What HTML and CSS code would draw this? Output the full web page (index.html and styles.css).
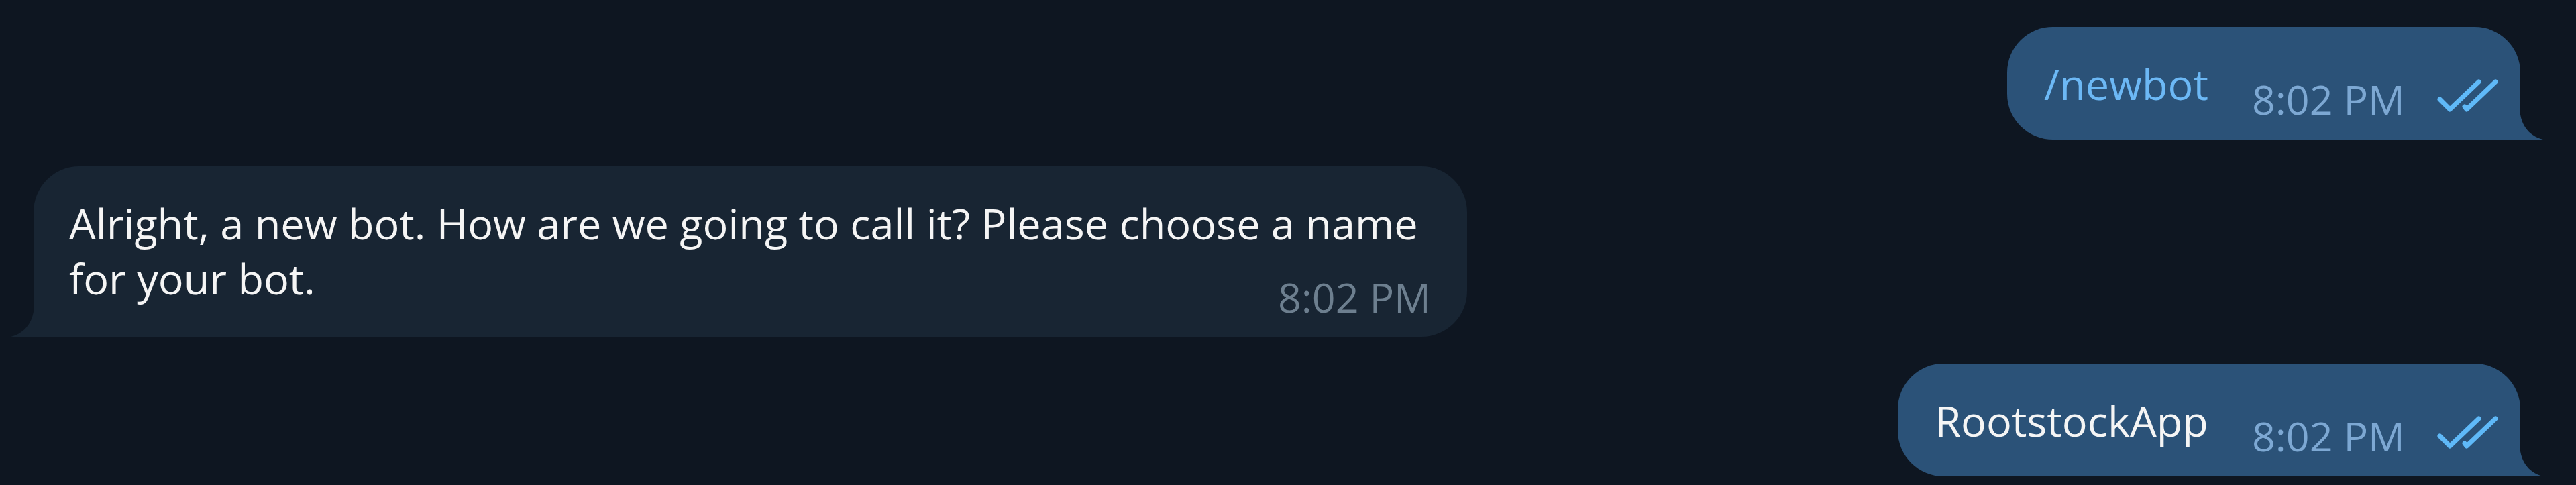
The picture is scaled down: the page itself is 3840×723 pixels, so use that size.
FILE: index.html
```html
<!DOCTYPE html>
<html lang="en">

<head>
    <meta charset="UTF-8">
    <meta name="viewport" content="width=device-width, initial-scale=1.0">
    <title>BotFather</title>
    <link rel="stylesheet" href="styles.css">
</head>

<body>
    <div class="chat">
        <div class="msg out">
            <div class="bubble">
                <span class="text command">/newbot</span>
                <span class="meta">
                    <span class="time">8:02 PM</span>
                    <svg class="checks" viewBox="0 0 92 50"><path d="M4 30 L19 45 L62 4 M41 41 L44 45 L87 4" /></svg>
                </span>
                <svg class="tail" viewBox="0 0 35 50"><path d="M0 0 C0 26 12 44 35 50 L0 50 Z" /></svg>
            </div>
        </div>

        <div class="msg in">
            <div class="bubble">
                <div class="text">
                    <span class="line">Alright, a new bot. How are we going to call it? Please choose a name</span>
                    <span class="line">for your bot.</span>
                </div>
                <span class="meta">
                    <span class="time">8:02 PM</span>
                </span>
                <svg class="tail" viewBox="0 0 35 50"><path d="M0 0 C0 26 12 44 35 50 L0 50 Z" /></svg>
            </div>
        </div>

        <div class="msg out">
            <div class="bubble">
                <span class="text">RootstockApp</span>
                <span class="meta">
                    <span class="time">8:02 PM</span>
                    <svg class="checks" viewBox="0 0 92 50"><path d="M4 30 L19 45 L62 4 M41 41 L44 45 L87 4" /></svg>
                </span>
                <svg class="tail" viewBox="0 0 35 50"><path d="M0 0 C0 26 12 44 35 50 L0 50 Z" /></svg>
            </div>
        </div>
    </div>
</body>

</html>
```

FILE: styles.css
```css
body {
    margin: 0;
    background: #0e1621;
    font-family: "Open Sans", "Liberation Sans", sans-serif;
    color: #f5f5f5;
}

.chat {
    display: flex;
    flex-direction: column;
    gap: 40px;
    padding: 40px 83px 0 50px;
}

.msg.out {
    align-self: flex-end;
}

.msg.in {
    align-self: flex-start;
}

.bubble {
    position: relative;
    display: flex;
    align-items: flex-end;
    box-sizing: border-box;
    padding: 44px 32px 29px 55px;
    border-radius: 68px;
    font-size: 63px;
    line-height: 82px;
}

.out .bubble {
    background: #2b5278;
    border-bottom-right-radius: 0;
}

.in .bubble {
    background: #182533;
    border-bottom-left-radius: 0;
    flex-direction: column;
    align-items: stretch;
    width: 2137px;
    padding: 44px 54px 28px 53px;
}

.text {
    margin-bottom: 13px;
    white-space: nowrap;
}

.in .text {
    margin-bottom: 0;
}

.line {
    display: block;
    width: fit-content;
}

.command {
    color: #6cb8f5;
}

.meta {
    display: flex;
    align-items: center;
    gap: 48px;
    margin-left: 65px;
    font-size: 61px;
    line-height: 62px;
}

.in .meta {
    align-self: flex-end;
    margin-top: -44px;
}

.time {
    color: #7da8d3;
}

.in .time {
    color: #6d7f8f;
}

.checks {
    width: 92px;
    height: 50px;
    margin-bottom: 10px;
    fill: none;
    stroke: #5fb9f8;
    stroke-width: 7;
    stroke-linecap: round;
    stroke-linejoin: round;
}

.tail {
    position: absolute;
    bottom: 0;
    width: 35px;
    height: 50px;
}

.out .tail {
    right: -34px;
    fill: #2b5278;
}

.in .tail {
    left: -34px;
    fill: #182533;
    transform: scaleX(-1);
}
```
